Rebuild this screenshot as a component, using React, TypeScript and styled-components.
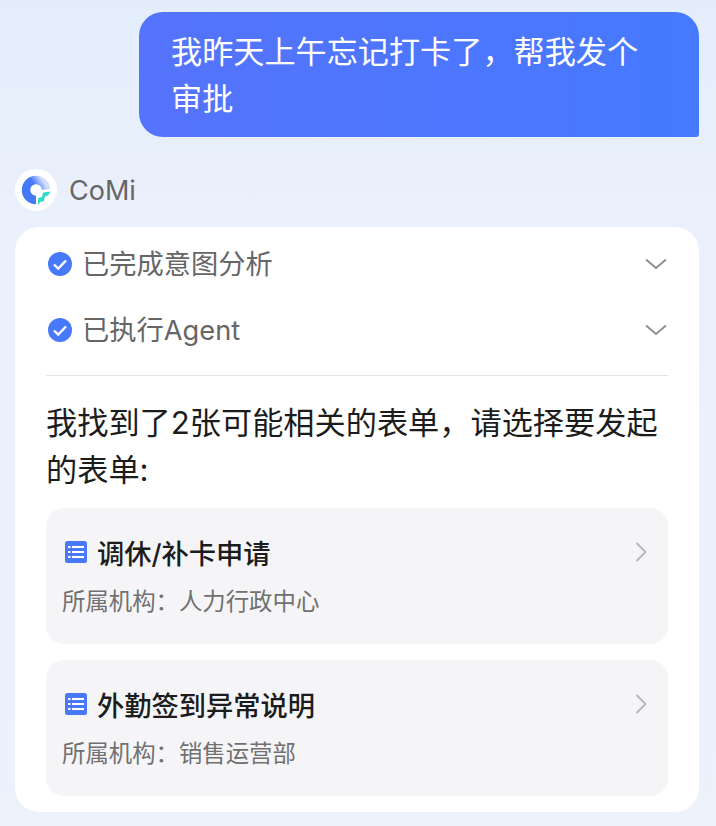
import React from "react";
import styled, { createGlobalStyle } from "styled-components";

const Global = createGlobalStyle`
  html, body { margin: 0; padding: 0; }
  body {
    width: 716px;
    height: 826px;
    overflow: hidden;
    font-family: "Inter", "Noto Sans CJK SC", sans-serif;
  }
`;

const Page = styled.div`
  box-sizing: border-box;
  width: 716px;
  height: 826px;
  padding: 12px 17px 0 15px;
  background: linear-gradient(180deg, #e3eefa 0%, #ebf0fc 30%, #edf1fc 100%);
  display: flex;
  flex-direction: column;
`;

const UserBubble = styled.div`
  box-sizing: border-box;
  align-self: flex-end;
  width: 560px;
  height: 125px;
  padding: 17px 55px 0 32px;
  border-radius: 24px 24px 3px 24px;
  background: linear-gradient(90deg, #5573fb 0%, #4579ff 100%);
  color: #fff;
  font-size: 31.15px;
  line-height: 47px;
`;

const BotHeader = styled.div`
  display: flex;
  align-items: center;
  gap: 12px;
  margin-top: 32px;
  height: 42px;
`;

const Avatar = styled.div`
  width: 42px;
  height: 42px;
  border-radius: 50%;
  background: #fff;
  display: flex;
  align-items: center;
  justify-content: center;
`;

const BotName = styled.span`
  font-size: 27px;
  color: #666;
`;

const Card = styled.div`
  box-sizing: border-box;
  margin-top: 16px;
  height: 585px;
  padding: 4px 31px 0;
  background: #fff;
  border-radius: 24px;
  display: flex;
  flex-direction: column;
`;

const StepRow = styled.div`
  display: flex;
  align-items: center;
  height: 66px;
`;

const StepLabel = styled.span`
  flex: 1;
  margin-left: 10px;
  margin-top: -5px;
  font-size: 27.25px;
  color: #666;
`;

const Divider = styled.div`
  height: 1px;
  background: #e2e2e2;
  margin-top: 12px;
`;

const Answer = styled.p`
  margin: 24px 0 14px;
  font-size: 31.2px;
  line-height: 47px;
  color: #1c1c1c;
`;

const FormList = styled.div`
  display: flex;
  flex-direction: column;
  gap: 16px;
`;

const FormCard = styled.div`
  box-sizing: border-box;
  height: 136px;
  padding: 22px 20px 0 16px;
  border-radius: 18px;
  background: #f5f5f8;
  display: flex;
  flex-direction: column;
`;

const FormTitleRow = styled.div`
  display: flex;
  align-items: center;
  height: 44px;
  padding-left: 3px;
`;

const FormTitle = styled.span`
  flex: 1;
  margin-left: 10px;
  font-size: 27.25px;
  font-weight: 500;
  color: #1c1c1c;
`;

const FormMeta = styled.div`
  margin-top: 6px;
  font-size: 23.4px;
  line-height: 44px;
  color: #707070;
`;

const Check = () => (
  <svg width="24" height="24" viewBox="0 0 24 24" style={{ marginLeft: 2 }}>
    <circle cx="12" cy="12" r="12" fill="#4879fb" />
    <path d="M6 12.5l4.2 4 7.8-8" fill="none" stroke="#fff" strokeWidth="2.4" />
  </svg>
);

const ChevronDown = () => (
  <svg width="22" height="12" viewBox="0 0 22 12" style={{ marginRight: 1 }}>
    <path d="M1 1.5l10 8.5 10-8.5" fill="none" stroke="#8f8f8f" strokeWidth="2" />
  </svg>
);

const ChevronRight = () => (
  <svg width="12" height="20" viewBox="0 0 12 20" style={{ marginRight: 1 }}>
    <path d="M1.5 1l9 9-9 9" fill="none" stroke="#b8b8bc" strokeWidth="2" />
  </svg>
);

const ListIcon = () => (
  <svg width="22" height="22" viewBox="0 0 22 22">
    <rect width="22" height="22" rx="2.5" fill="#4879fb" />
    <g fill="#fff">
      <rect x="3" y="5" width="2.5" height="2" />
      <rect x="7" y="5" width="12" height="2" />
      <rect x="3" y="10" width="2.5" height="2" />
      <rect x="7" y="10" width="12" height="2" />
      <rect x="3" y="15" width="2.5" height="2" />
      <rect x="7" y="15" width="12" height="2" />
    </g>
  </svg>
);

const Logo = () => (
  <svg width="30" height="30" viewBox="0 0 30 30">
    <defs>
      <linearGradient id="ring" x1="0.15" y1="0.7" x2="0.95" y2="0.2">
        <stop offset="0.5" stopColor="#4579f5" />
        <stop offset="1" stopColor="#d3defc" />
      </linearGradient>
    </defs>
    <path
      d="M15 25A10 10 0 1 1 25 14.5"
      fill="none"
      stroke="url(#ring)"
      strokeWidth="8.5"
    />
    <path d="M17 30v-7l4-1 1-4.5 7.5-1-2.5 4-3 1-1 4.5-3.5 1z" fill="#34dcc8" />
  </svg>
);

const COMMA = "\uFF0C";
const COLON = "\uFF1A";

const forms = [
  { title: "调休/补卡申请", org: `所属机构${COLON}人力行政中心` },
  { title: "外勤签到异常说明", org: `所属机构${COLON}销售运营部` },
];

export default function App() {
  return (
    <Page>
      <Global />
      <UserBubble>{`我昨天上午忘记打卡了${COMMA}帮我发个审批`}</UserBubble>
      <BotHeader>
        <Avatar>
          <Logo />
        </Avatar>
        <BotName>CoMi</BotName>
      </BotHeader>
      <Card>
        <StepRow>
          <Check />
          <StepLabel>已完成意图分析</StepLabel>
          <ChevronDown />
        </StepRow>
        <StepRow>
          <Check />
          <StepLabel>已执行Agent</StepLabel>
          <ChevronDown />
        </StepRow>
        <Divider />
        <Answer>{`我找到了2张可能相关的表单${COMMA}请选择要发起的表单:`}</Answer>
        <FormList>
          {forms.map((f) => (
            <FormCard key={f.title}>
              <FormTitleRow>
                <ListIcon />
                <FormTitle>{f.title}</FormTitle>
                <ChevronRight />
              </FormTitleRow>
              <FormMeta>{f.org}</FormMeta>
            </FormCard>
          ))}
        </FormList>
      </Card>
    </Page>
  );
}
